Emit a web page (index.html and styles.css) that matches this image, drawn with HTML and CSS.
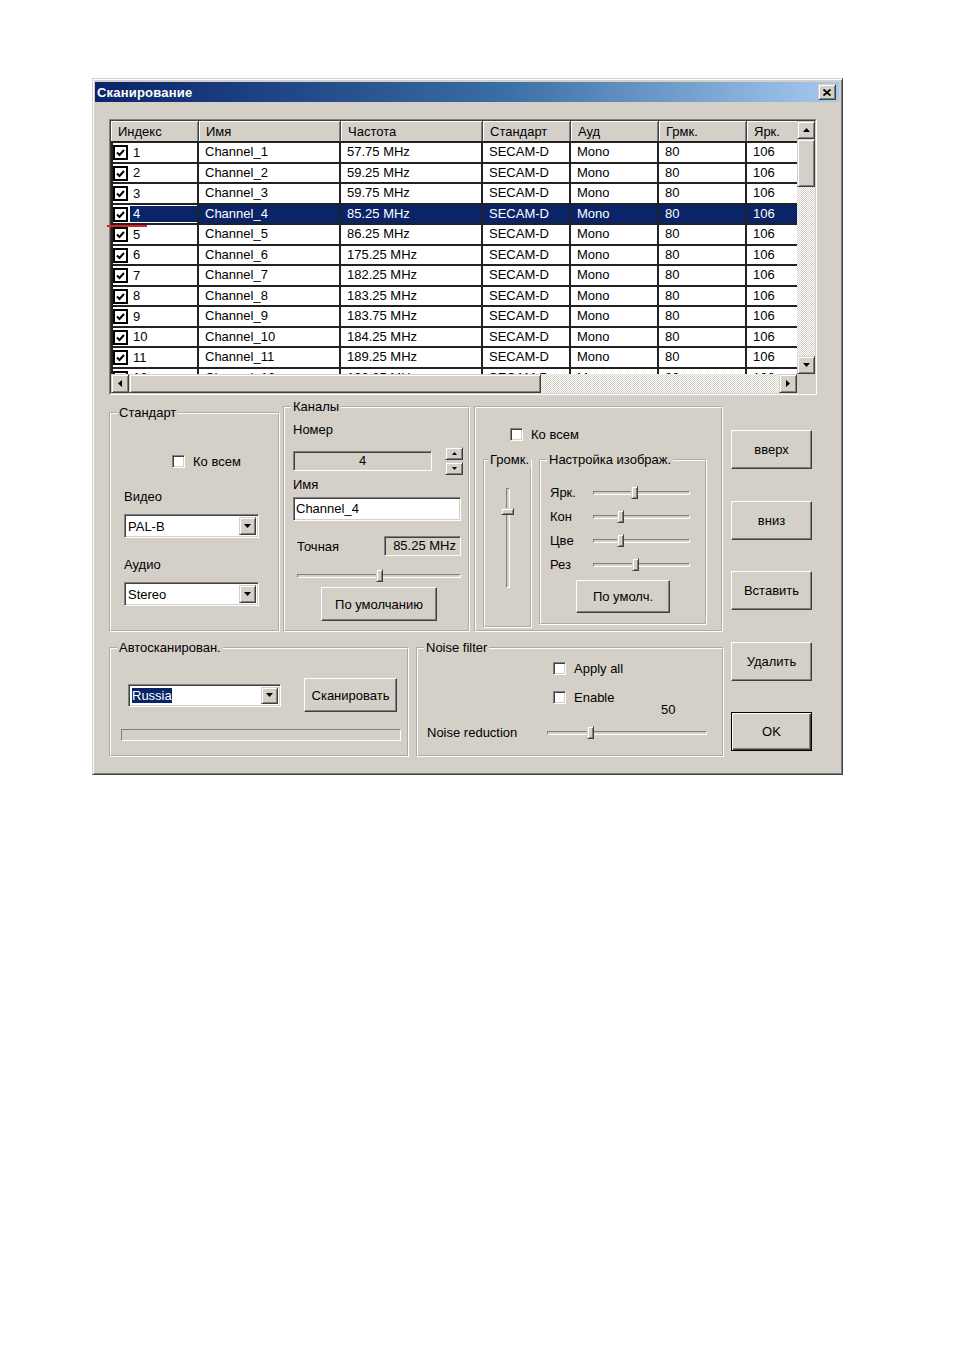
FILE: index.html
```html
<!DOCTYPE html>
<html lang="ru">
<head>
    <meta charset="UTF-8">
    <title>Сканирование</title>
    <link rel="stylesheet" href="styles.css">
</head>
<body>
    <div class="dialog">
        <div class="titlebar">
            <span class="title">Сканирование</span>
            <span class="close raised">
                <svg width="8" height="7" viewBox="0 0 8 7"><path d="M0.5 0.5 L7.5 6.5 M7.5 0.5 L0.5 6.5" stroke="#000" stroke-width="1.8"/></svg>
            </span>
        </div>

        <div class="content">
            <!-- channel list -->
            <div class="listview">
                <div class="listview-inner">
                    <div class="grid-area">
                        <table class="channels">
                            <colgroup>
                                <col style="width:88px"><col style="width:142px"><col style="width:142px">
                                <col style="width:88px"><col style="width:88px"><col style="width:88px"><col style="width:88px">
                            </colgroup>
                            <thead>
                                <tr>
                                    <th>Индекс</th><th>Имя</th><th>Частота</th><th>Стандарт</th><th>Ауд</th><th>Грмк.</th><th>Ярк.</th>
                                </tr>
                            </thead>
                            <tbody>
                                <tr><td class="idx"><span class="tick"></span><span class="num">1</span></td><td>Channel_1</td><td>57.75 MHz</td><td>SECAM-D</td><td>Mono</td><td>80</td><td>106</td></tr>
                                <tr><td class="idx"><span class="tick"></span><span class="num">2</span></td><td>Channel_2</td><td>59.25 MHz</td><td>SECAM-D</td><td>Mono</td><td>80</td><td>106</td></tr>
                                <tr><td class="idx"><span class="tick"></span><span class="num">3</span></td><td>Channel_3</td><td>59.75 MHz</td><td>SECAM-D</td><td>Mono</td><td>80</td><td>106</td></tr>
                                <tr class="selected"><td class="idx"><span class="tick"></span><span class="num">4</span></td><td>Channel_4</td><td>85.25 MHz</td><td>SECAM-D</td><td>Mono</td><td>80</td><td>106</td></tr>
                                <tr><td class="idx"><span class="tick"></span><span class="num">5</span></td><td>Channel_5</td><td>86.25 MHz</td><td>SECAM-D</td><td>Mono</td><td>80</td><td>106</td></tr>
                                <tr><td class="idx"><span class="tick"></span><span class="num">6</span></td><td>Channel_6</td><td>175.25 MHz</td><td>SECAM-D</td><td>Mono</td><td>80</td><td>106</td></tr>
                                <tr><td class="idx"><span class="tick"></span><span class="num">7</span></td><td>Channel_7</td><td>182.25 MHz</td><td>SECAM-D</td><td>Mono</td><td>80</td><td>106</td></tr>
                                <tr><td class="idx"><span class="tick"></span><span class="num">8</span></td><td>Channel_8</td><td>183.25 MHz</td><td>SECAM-D</td><td>Mono</td><td>80</td><td>106</td></tr>
                                <tr><td class="idx"><span class="tick"></span><span class="num">9</span></td><td>Channel_9</td><td>183.75 MHz</td><td>SECAM-D</td><td>Mono</td><td>80</td><td>106</td></tr>
                                <tr><td class="idx"><span class="tick"></span><span class="num">10</span></td><td>Channel_10</td><td>184.25 MHz</td><td>SECAM-D</td><td>Mono</td><td>80</td><td>106</td></tr>
                                <tr><td class="idx"><span class="tick"></span><span class="num">11</span></td><td>Channel_11</td><td>189.25 MHz</td><td>SECAM-D</td><td>Mono</td><td>80</td><td>106</td></tr>
                                <tr><td class="idx"><span class="tick"></span><span class="num">12</span></td><td>Channel_12</td><td>192.25 MHz</td><td>SECAM-D</td><td>Mono</td><td>80</td><td>106</td></tr>
                            </tbody>
                        </table>
                    </div>
                    <div class="vscroll">
                        <span class="sb-btn raised"><svg width="7" height="4"><polygon points="3.5,0 7,4 0,4"/></svg></span>
                        <span class="sb-thumb raised"></span>
                        <span class="sb-track"></span>
                        <span class="sb-btn raised"><svg width="7" height="4"><polygon points="0,0 7,0 3.5,4"/></svg></span>
                    </div>
                    <div class="hscroll">
                        <span class="sb-btn raised"><svg width="4" height="7"><polygon points="4,0 4,7 0,3.5"/></svg></span>
                        <span class="sb-thumb raised"></span>
                        <span class="sb-track"></span>
                        <span class="sb-btn raised"><svg width="4" height="7"><polygon points="0,0 4,3.5 0,7"/></svg></span>
                    </div>
                    <div class="corner"></div>
                </div>
                <span class="mark"></span>
            </div>

            <div class="lower">
                <div class="panels">
                    <div class="panels-top">
                        <fieldset class="gb std">
                            <legend>Стандарт</legend>
                            <div class="cb-row std-all"><span class="cb"></span>Ко всем</div>
                            <div class="std-label first">Видео</div>
                            <div class="combo std-combo"><span class="combo-text">PAL-B</span><span class="combo-btn raised"><svg width="7" height="4"><polygon points="0,0 7,0 3.5,4"/></svg></span></div>
                            <div class="std-label">Аудио</div>
                            <div class="combo std-combo"><span class="combo-text">Stereo</span><span class="combo-btn raised"><svg width="7" height="4"><polygon points="0,0 7,0 3.5,4"/></svg></span></div>
                        </fieldset>

                        <fieldset class="gb chan">
                            <legend>Каналы</legend>
                            <div class="chan-label">Номер</div>
                            <div class="num-row">
                                <span class="field num-field">4</span>
                                <span class="spin">
                                    <span class="spin-btn raised"><svg width="5" height="3"><polygon points="2.5,0 5,3 0,3"/></svg></span>
                                    <span class="spin-btn raised"><svg width="5" height="3"><polygon points="0,0 5,0 2.5,3"/></svg></span>
                                </span>
                            </div>
                            <div class="chan-label name-label">Имя</div>
                            <div class="field text-field">Channel_4</div>
                            <div class="fine-row">
                                <span>Точная</span>
                                <span class="field freq-field">85.25 MHz</span>
                            </div>
                            <div class="slider fine-slider"><span class="channel"></span><span class="thumb raised" style="left:79px"></span></div>
                            <button class="btn default-btn">По умолчанию</button>
                        </fieldset>

                        <div class="frame pic">
                            <div class="cb-row pic-all"><span class="cb"></span>Ко всем</div>
                            <div class="pic-groups">
                                <fieldset class="gb vol">
                                    <legend>Громк.</legend>
                                    <div class="vslider"><span class="vchannel"></span><span class="vthumb raised" style="top:20px"></span></div>
                                </fieldset>
                                <fieldset class="gb image">
                                    <legend>Настройка изображ.</legend>
                                    <div class="img-row first"><span class="img-label">Ярк.</span><span class="slider img-slider"><span class="channel"></span><span class="thumb raised" style="left:38px"></span></span></div>
                                    <div class="img-row"><span class="img-label">Кон</span><span class="slider img-slider"><span class="channel"></span><span class="thumb raised" style="left:24px"></span></span></div>
                                    <div class="img-row"><span class="img-label">Цве</span><span class="slider img-slider"><span class="channel"></span><span class="thumb raised" style="left:24px"></span></span></div>
                                    <div class="img-row"><span class="img-label">Рез</span><span class="slider img-slider"><span class="channel"></span><span class="thumb raised" style="left:39px"></span></span></div>
                                    <button class="btn img-btn">По умолч.</button>
                                </fieldset>
                            </div>
                        </div>
                    </div>

                    <div class="panels-bottom">
                        <fieldset class="gb auto">
                            <legend>Автосканирован.</legend>
                            <div class="scan-row">
                                <div class="combo country"><span class="combo-text"><span class="sel">Russia</span></span><span class="combo-btn raised"><svg width="7" height="4"><polygon points="0,0 7,0 3.5,4"/></svg></span></div>
                                <button class="btn scan-btn">Сканировать</button>
                            </div>
                            <div class="progress"></div>
                        </fieldset>

                        <fieldset class="gb noise">
                            <legend>Noise filter</legend>
                            <div class="cb-row noise-cb first"><span class="cb"></span>Apply all</div>
                            <div class="cb-row noise-cb"><span class="cb"></span>Enable</div>
                            <div class="noise-value">50</div>
                            <div class="noise-row">
                                <span class="noise-label">Noise reduction</span>
                                <span class="slider noise-slider"><span class="channel"></span><span class="thumb raised" style="left:40px"></span></span>
                            </div>
                        </fieldset>
                    </div>
                </div>

                <div class="side-buttons">
                    <button class="btn side-btn">вверх</button>
                    <button class="btn side-btn">вниз</button>
                    <button class="btn side-btn">Вставить</button>
                    <button class="btn side-btn">Удалить</button>
                    <button class="btn side-btn ok">OK</button>
                </div>
            </div>
        </div>
    </div>
</body>
</html>
```

FILE: styles.css
```css
body {
    margin: 0;
    background: #fff;
    font-family: "Liberation Sans", Arial, sans-serif;
    font-size: 13px;
    color: #000;
}

/* shared 3d looks */
.raised {
    box-sizing: border-box;
    background: #d4d0c8;
    border: 1px solid;
    border-color: #d4d0c8 #404040 #404040 #d4d0c8;
    box-shadow: inset 1px 1px #fff, inset -1px -1px #808080;
}
.field, .combo, .cb, .progress {
    box-sizing: border-box;
    border: 1px solid;
    border-color: #808080 #fff #fff #808080;
    box-shadow: inset 1px 1px #404040, inset -1px -1px #d4d0c8;
}
.btn {
    box-sizing: border-box;
    display: block;
    padding: 0;
    font: inherit;
    color: #000;
    background: #d4d0c8;
    border: 1px solid;
    border-color: #fff #404040 #404040 #fff;
    box-shadow: inset -1px -1px #808080;
}

.dialog {
    box-sizing: border-box;
    width: 751px;
    height: 697px;
    margin: 78px 0 0 92px;
    padding: 3px 3px 3px 2px;
    background: #d4d0c8;
    border: 1px solid;
    border-color: #d4d0c8 #404040 #404040 #d4d0c8;
    box-shadow: inset 1px 1px #fff, inset -1px -1px #808080;
}
.titlebar {
    height: 20px;
    display: flex;
    align-items: center;
    justify-content: space-between;
    padding: 0 3px 0 2px;
    background: linear-gradient(to right, #0a246a, #3a6ea5 55%, #a6caf0);
}
.title {
    color: #fff;
    font-weight: bold;
    font-size: 13px;
    letter-spacing: 0.2px;
}
.close {
    width: 18px;
    height: 16px;
    display: flex;
    align-items: center;
    justify-content: center;
}

.content {
    padding: 17px 0 0 14px;
}

/* list view */
.listview {
    position: relative;
    box-sizing: border-box;
    width: 708px;
    height: 276px;
    border: 1px solid;
    border-color: #808080 #fff #fff #808080;
}
.listview-inner {
    height: 100%;
    box-sizing: border-box;
    border: 1px solid;
    border-color: #404040 #d4d0c8 #d4d0c8 #404040;
    display: grid;
    grid-template-columns: 686px 18px;
    grid-template-rows: 253px 19px;
    background: #fff;
}
.grid-area {
    overflow: hidden;
}
.channels {
    table-layout: fixed;
    width: 724px;
    border-collapse: separate;
    border-spacing: 0;
}
.channels th {
    height: 22px;
    box-sizing: border-box;
    padding: 0 0 0 7px;
    text-align: left;
    font-weight: normal;
    background: #d4d0c8;
    border-right: 1px solid #404040;
    border-bottom: 2px solid #222;
    box-shadow: inset 1px 1px #fff, inset -1px 0 #808080;
    white-space: nowrap;
}
.channels tbody tr {
    height: 20.5px;
}
.channels td {
    padding: 0 0 0 6px;
    border-right: 2px solid #222;
    border-bottom: 2px solid #222;
    white-space: nowrap;
    line-height: 16px;
    vertical-align: middle;
}
.channels td.idx {
    padding: 0 0 0 0;
    border-left: 2px solid #222;
}
.idx {
    display: table-cell;
}
.idx .tick {
    display: inline-block;
    vertical-align: middle;
    width: 15px;
    height: 15px;
    margin-left: 0;
    box-sizing: border-box;
    border: 2px solid #000;
    background: #fff url("data:image/svg+xml,%3Csvg xmlns='http://www.w3.org/2000/svg' width='11' height='11'%3E%3Cpolyline points='2,5.5 4.5,8 9,3' fill='none' stroke='%23000' stroke-width='2'/%3E%3C/svg%3E") center no-repeat;
}
.idx .num {
    display: inline-block;
    vertical-align: middle;
    width: 64px;
    margin-left: 2px;
    padding-left: 3px;
}
.channels tr.selected td {
    background: #0a246a;
    color: #fff;
}
.channels tr.selected td.idx {
    background: #fff;
    color: #fff;
}
.channels tr.selected .num {
    background: #0a246a;
}

.vscroll, .hscroll {
    display: flex;
    background: #d4d0c8;
}
.vscroll {
    flex-direction: column;
}
.sb-btn {
    width: 18px;
    height: 18px;
    display: flex;
    align-items: center;
    justify-content: center;
    flex: none;
}
.hscroll .sb-btn {
    height: 19px;
}
.vscroll .sb-thumb {
    height: 48px;
}
.hscroll .sb-thumb {
    width: 412px;
}
.sb-track {
    flex: 1;
    background: repeating-conic-gradient(#d4d0c8 0 25%, #fff 0 50%) 0 0 / 2px 2px;
}
.corner {
    background: #d4d0c8;
}
.mark {
    position: absolute;
    left: -3px;
    top: 105px;
    width: 40px;
    height: 2px;
    background: #e0201c;
}

/* lower part */
.lower {
    display: flex;
    gap: 7px;
    margin-top: 5px;
}
.panels {
    width: 615px;
}
.panels-top {
    display: flex;
    align-items: flex-end;
    height: 232px;
}
.panels-bottom {
    display: flex;
    gap: 7px;
    margin-top: 9px;
}

.gb {
    margin: 0;
    padding: 0;
    min-width: 0;
    box-sizing: border-box;
    border: 2px groove #fff;
}
.gb legend {
    margin-left: 6px;
    padding: 0 2px;
    line-height: 14px;
}
.frame {
    box-sizing: border-box;
    border: 2px groove #fff;
}

.cb-row {
    display: flex;
    align-items: center;
    height: 16px;
}
.cb {
    width: 13px;
    height: 13px;
    background: #fff;
    margin-right: 8px;
}

.std {
    width: 171px;
    height: 226px;
}
.std-all {
    margin: 33px 0 0 61px;
}
.std-label {
    margin: 19px 0 0 13px;
    line-height: 16px;
}
.std-label.first {
    margin-top: 20px;
}
.combo {
    display: flex;
    align-items: center;
    background: #fff;
    padding: 2px;
}
.combo-text {
    flex: 1;
    padding-left: 1px;
}
.combo-btn {
    width: 17px;
    align-self: stretch;
    display: flex;
    align-items: center;
    justify-content: center;
}
.std-combo {
    width: 135px;
    height: 24px;
    margin: 9px 0 0 13px;
}
.std-label + .std-combo {
    margin-top: 9px;
}

.chan {
    width: 187px;
    height: 232px;
    margin-left: 3px;
}
.chan-label {
    margin: 8px 0 0 8px;
    line-height: 16px;
}
.chan-label.name-label {
    margin-top: 2px;
}
.num-row {
    display: flex;
    align-items: center;
    height: 28px;
    margin: 9px 0 0 8px;
}
.num-field {
    width: 139px;
    height: 20px;
    line-height: 18px;
    text-align: center;
    background: #d4d0c8;
}
.spin {
    display: flex;
    flex-direction: column;
    gap: 2px;
    margin-left: 13px;
}
.spin-btn {
    width: 18px;
    height: 13px;
    display: flex;
    align-items: center;
    justify-content: center;
}
.text-field {
    width: 168px;
    height: 24px;
    line-height: 22px;
    margin: 4px 0 0 8px;
    padding-left: 2px;
    background: #fff;
}
.fine-row {
    display: flex;
    align-items: center;
    height: 20px;
    margin: 15px 7px 0 12px;
    justify-content: space-between;
}
.freq-field {
    width: 77px;
    height: 20px;
    line-height: 18px;
    text-align: right;
    padding-right: 4px;
    background: #d4d0c8;
}

.slider {
    position: relative;
    display: block;
    height: 13px;
}
.channel {
    position: absolute;
    left: 0;
    right: 0;
    top: 5px;
    height: 4px;
    box-sizing: border-box;
    border: 1px solid;
    border-color: #808080 #fff #fff #808080;
    background: #d4d0c8;
}
.thumb {
    position: absolute;
    top: 0;
    width: 7px;
    height: 13px;
}
.fine-slider {
    width: 164px;
    margin: 13px 0 0 12px;
}
.default-btn {
    width: 116px;
    height: 34px;
    margin: 5px 0 0 36px;
}

.pic {
    width: 249px;
    height: 226px;
    margin-left: 4px;
}
.pic-all {
    margin: 18px 0 0 34px;
}
.pic-groups {
    display: flex;
    align-items: flex-start;
    gap: 7px;
    margin: 11px 0 0 7px;
}
.vol {
    width: 49px;
    height: 175px;
}
.vol legend {
    margin-left: 3px;
}
.vslider {
    position: relative;
    width: 13px;
    height: 100px;
    margin: 21px auto 0;
}
.vchannel {
    position: absolute;
    top: 0;
    bottom: 0;
    left: 5px;
    width: 4px;
    box-sizing: border-box;
    border: 1px solid;
    border-color: #808080 #fff #fff #808080;
    background: #d4d0c8;
}
.vthumb {
    position: absolute;
    left: 0;
    width: 13px;
    height: 7px;
}
.image {
    width: 168px;
    height: 172px;
}
.img-row {
    display: flex;
    align-items: center;
    height: 16px;
    margin: 8px 0 0 9px;
}
.img-row.first {
    margin-top: 17px;
}
.img-label {
    width: 43px;
}
.img-slider {
    width: 97px;
}
.img-btn {
    width: 94px;
    height: 33px;
    margin: 8px 0 0 35px;
}

.auto {
    width: 300px;
    height: 116px;
}
.scan-row {
    display: flex;
    align-items: center;
    height: 34px;
    margin: 23px 0 0 17px;
}
.country {
    width: 153px;
    height: 23px;
}
.sel {
    background: #0a246a;
    color: #fff;
}
.scan-btn {
    width: 93px;
    height: 34px;
    margin-left: 23px;
}
.progress {
    width: 280px;
    height: 12px;
    margin: 17px 0 0 10px;
    box-shadow: none;
}

.noise {
    width: 308px;
    height: 116px;
}
.noise-cb {
    margin: 13px 0 0 135px;
}
.noise-cb.first {
    margin-top: 5px;
}
.noise-value {
    margin: -3px 0 0 243px;
    line-height: 16px;
}
.noise-row {
    display: flex;
    align-items: center;
    height: 16px;
    margin: 6px 0 0 9px;
}
.noise-label {
    width: 120px;
}
.noise-slider {
    width: 160px;
}

.side-buttons {
    display: flex;
    flex-direction: column;
    gap: 31.5px;
    margin-top: 30px;
}
.side-btn {
    width: 81px;
    height: 39px;
}
.side-btn.ok {
    border-color: #000;
    box-shadow: inset 1px 1px #fff, inset -1px -1px #404040, inset -2px -2px #808080;
}
```
